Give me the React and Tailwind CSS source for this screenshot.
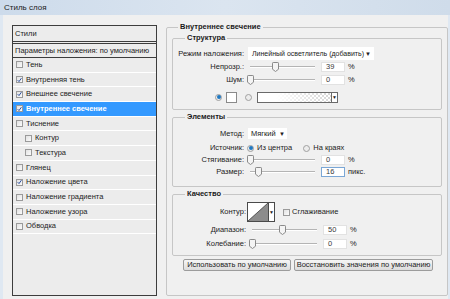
import React from "react";

const styles = [
  { label: "Тень", checked: false },
  { label: "Внутренняя тень", checked: true },
  { label: "Внешнее свечение", checked: true },
  { label: "Внутреннее свечение", checked: true, active: true },
  { label: "Тиснение", checked: false },
  { label: "Контур", checked: false, sub: true },
  { label: "Текстура", checked: false, sub: true },
  { label: "Глянец", checked: false },
  { label: "Наложение цвета", checked: true },
  { label: "Наложение градиента", checked: false },
  { label: "Наложение узора", checked: false },
  { label: "Обводка", checked: false },
];

const Check = ({ checked }) => (
  <span className="w-[7px] h-[7px] border border-[#9a9a9a] bg-gradient-to-br from-[#e2e2e2] to-[#fbfbfb] flex items-center justify-center shrink-0">
    {checked && (
      <svg width="6" height="6" viewBox="0 0 6 6">
        <path d="M0.8 3.2 L2.4 4.9 L5.3 0.8" fill="none" stroke="#2c4f9e" strokeWidth="1.2" />
      </svg>
    )}
  </span>
);

const Radio = ({ on }) => (
  <span className="w-[7px] h-[7px] rounded-full border border-[#a0a0a0] bg-[#ececec] flex items-center justify-center shrink-0">
    {on && <span className="w-[4px] h-[4px] rounded-full bg-[#1f78c1]" />}
  </span>
);

const Slider = ({ pos }) => (
  <div className="relative w-[71px] h-full flex items-center shrink-0">
    <div className="ml-[3px] w-[65px] h-[2px] border-t border-[#b4b4b4] border-b border-b-white" />
    <svg className="absolute top-1/2 -translate-y-1/2" style={{ left: pos - 3.5 }} width="7" height="10" viewBox="0 0 7 10">
      <path d="M1.2 0.5 H5.8 Q6.5 0.5 6.5 1.2 V7.2 L3.5 9.5 L0.5 7.2 V1.2 Q0.5 0.5 1.2 0.5 Z" fill="#f4f4f4" stroke="#8a8a8a" />
    </svg>
  </div>
);

const NumBox = ({ value, focus }) => (
  <div className={`ml-[3px] w-[24px] h-[10px] bg-white border ${focus ? "border-[#7aa7d6]" : "border-[#e2e2e2]"} pl-[4px] flex items-center text-[#3a3a3a]`}>
    {value}
  </div>
);

const Row = ({ label, children, h = "h-[13px]", lw = "w-[71px]" }) => (
  <div className={`flex items-center ${h}`}>
    <div className={`${lw} text-right shrink-0`}>{label}</div>
    {children}
  </div>
);

const SliderRow = ({ label, pos, value, unit = "%", focus, h, lw }) => (
  <Row label={label} h={h} lw={lw}>
    <div className="ml-[3px] h-full flex items-center">
      <Slider pos={pos} />
    </div>
    <NumBox value={value} focus={focus} />
    <span className="ml-[3px]">{unit}</span>
  </Row>
);

const Legend = ({ children }) => (
  <legend className="ml-[12px] px-[2px] font-bold leading-[10px] text-[#1a1a1a]">{children}</legend>
);

export default function App() {
  return (
    <div className="w-[450px] h-[299px] overflow-hidden whitespace-nowrap bg-[#f0f0f0] font-['Liberation_Sans',Arial,sans-serif] text-[7.5px] leading-[10px] text-[#222]">
      <div className="h-[15px] bg-gradient-to-r from-[#cddbeb] via-[#dbe5f0] to-[#cfdcea] pl-[4px] flex items-center text-[8px] text-[#1b1b1b]">
        Стиль слоя
      </div>
      <div className="h-[284px] flex border-l-[3px] border-l-[#dfe8f2] border-r-[2px] border-r-[#dfe8f2] pl-[9px]">
        {/* list of styles */}
        <div className="mt-[10px] w-[145px] h-[271px] border border-[#3d3d3d] bg-[#ececec] flex flex-col">
          <div className="h-[16px] border-b border-[#3d3d3d] pl-[2px] flex items-center">Стили</div>
          <div className="mt-[1px] h-[15px] border-y border-[#3d3d3d] pl-[2px] flex items-center">
            Параметры наложения: по умолчанию
          </div>
          {styles.map((s) => (
            <div
              key={s.label}
              className={`h-[14.7px] border-b border-white flex items-center gap-[3px] ${s.sub ? "pl-[12px]" : "pl-[3px]"} ${s.active ? "bg-[#3399ff] text-white font-bold" : ""}`}
            >
              <Check checked={s.checked} />
              <span>{s.label}</span>
            </div>
          ))}
        </div>

        {/* settings */}
        <fieldset className="ml-[9px] mt-[7px] w-[282px] h-[274px] border border-[#c6c6c6] rounded-[2px] min-w-0">
          <legend className="ml-[11px] px-[2px] font-bold leading-[10px] text-[#1a1a1a]">Внутреннее свечение</legend>

          <fieldset className="mx-[5px] mt-[1px] border border-[#c6c6c6] rounded-[2px] pb-[6px] min-w-0">
            <Legend>Структура</Legend>
            <Row label="Режим наложения:" h="h-[13px] mt-[4px]">
              <div className="ml-[4px] w-[126px] h-full bg-white flex items-center justify-between pl-[4px] pr-[3px] text-[7px]">
                <span>Линейный осветлитель (добавить)</span>
                <span className="text-[6px]">▼</span>
              </div>
            </Row>
            <SliderRow label="Непрозр.:" pos={28} value="39" />
            <SliderRow label="Шум:" pos={3} value="0" />
            <div className="mt-[5px] h-[12px] flex items-center pl-[42px]">
              <Radio on />
              <span className="ml-[4px] w-[11px] h-[11px] bg-white border border-[#8a8a8a]" />
              <span className="ml-[8px]">
                <Radio />
              </span>
              <div className="ml-[5px] w-[81px] h-[11px] border border-[#6a6a6a] flex">
                <div className="flex-1 bg-[linear-gradient(to_right,#fff_25%,rgba(255,255,255,0)),repeating-conic-gradient(#d6d6d6_0_25%,#fff_0_50%)] bg-[length:100%_100%,4px_4px]" />
                <div className="w-[6px] border-l border-[#6a6a6a] bg-white flex items-center justify-center text-[5px]">▼</div>
              </div>
            </div>
          </fieldset>

          <fieldset className="mx-[5px] mt-[2px] border border-[#c6c6c6] rounded-[2px] pb-[8px] min-w-0">
            <Legend>Элементы</Legend>
            <Row label="Метод:" h="h-[11px] mt-[6px]">
              <div className="ml-[4px] w-[39px] h-full bg-white flex items-center justify-between pl-[3px] pr-[2px]">
                <span>Мягкий</span>
                <span className="text-[6px]">▼</span>
              </div>
            </Row>
            <Row label="Источник:" h="h-[12px] mt-[3px]">
              <span className="ml-[3px]">
                <Radio on />
              </span>
              <span className="ml-[3px]">Из центра</span>
              <span className="ml-[11px]">
                <Radio />
              </span>
              <span className="ml-[3px]">На краях</span>
            </Row>
            <SliderRow label="Стягивание:" pos={3} value="0" h="h-[12px]" />
            <SliderRow label="Размер:" pos={11} value="16" unit="пикс." focus h="h-[12px]" />
          </fieldset>

          <fieldset className="mx-[5px] mt-[2px] border border-[#c6c6c6] rounded-[2px] pb-[4px] min-w-0">
            <Legend>Качество</Legend>
            <Row label="Контур:" h="h-[20px] mt-[3px]" lw="w-[73px]">
              <div className="ml-[1px] h-[20px] flex border border-[#4a4a4a]">
                <svg width="20" height="18" viewBox="0 0 20 18" className="bg-white">
                  <polygon points="0,18 20,0 20,18" fill="#8c8c8c" />
                  <line x1="0" y1="18" x2="20" y2="0" stroke="#3a3a3a" strokeWidth="0.8" />
                </svg>
                <div className="w-[6px] border-l border-[#4a4a4a] bg-white flex items-center justify-center text-[5px]">▼</div>
              </div>
              <span className="ml-[8px]">
                <Check />
              </span>
              <span className="ml-[2px]">Сглаживание</span>
            </Row>
            <SliderRow label="Диапазон:" pos={33} value="50" h="h-[14px] mt-[1px]" lw="w-[73px]" />
            <SliderRow label="Колебание:" pos={3} value="0" h="h-[14px]" lw="w-[73px]" />
          </fieldset>

          <div className="mt-[3px] ml-[16px] flex gap-[3px]">
            <button className="w-[108px] h-[12px] border border-[#9c9c9c] rounded-[2px] bg-gradient-to-b from-[#f6f6f6] to-[#dcdcdc] flex items-center justify-center">
              Использовать по умолчанию
            </button>
            <button className="w-[139px] h-[12px] border border-[#9c9c9c] rounded-[2px] bg-gradient-to-b from-[#f6f6f6] to-[#dcdcdc] flex items-center justify-center">
              Восстановить значения по умолчанию
            </button>
          </div>
        </fieldset>
      </div>
    </div>
  );
}
